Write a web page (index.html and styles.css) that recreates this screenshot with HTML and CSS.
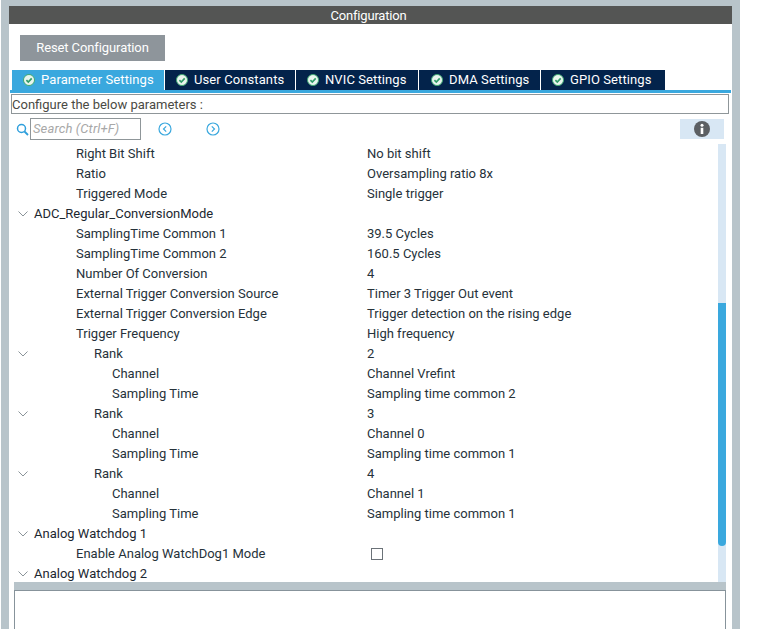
FILE: index.html
```html
<!DOCTYPE html>
<html lang="en">
<head>
<meta charset="utf-8">
<title>Configuration</title>
<link rel="stylesheet" href="styles.css">
</head>
<body>
<svg width="0" height="0" class="defs">
  <symbol id="ok" viewBox="0 0 12 12"><circle cx="6" cy="6" r="5.5" fill="#d9efe2" stroke="#3fa873"/><circle cx="6" cy="6" r="4.6" fill="#e9f5ee"/><path d="M3.4 6.1 5.3 8 8.7 4.4" fill="none" stroke="#2f9c68" stroke-width="1.7"/></symbol>
  <symbol id="chev" viewBox="0 0 10 6"><path d="M.5.5 5 5 9.500.5" fill="none" stroke="#8a9499" stroke-width="1"/></symbol>
</svg>
<div class="panel">
  <div class="inner">
    <div class="title">Configuration</div>
    <div class="btn">Reset Configuration</div>
    <div class="tabs">
      <div class="tab active t1"><svg class="ok"><use href="#ok"/></svg><span class="tabtext">Parameter Settings</span></div>
      <div class="tab t2"><svg class="ok"><use href="#ok"/></svg><span class="tabtext">User Constants</span></div>
      <div class="tab t3"><svg class="ok"><use href="#ok"/></svg><span class="tabtext">NVIC Settings</span></div>
      <div class="tab t4"><svg class="ok"><use href="#ok"/></svg><span class="tabtext">DMA Settings</span></div>
      <div class="tab t5"><svg class="ok"><use href="#ok"/></svg><span class="tabtext">GPIO Settings</span></div>
    </div>
    <div class="rule"></div>
    <div class="hint">Configure the below parameters :</div>
    <div class="searchrow">
      <svg class="mag" viewBox="0 0 13 13"><circle cx="5.500" cy="5.500" r="4" fill="none" stroke="#2f9fdc" stroke-width="1.500"/><path d="M8.500 8.500 12 12" stroke="#2f9fdc" stroke-width="1.800"/></svg>
      <div class="search">Search (Ctrl+F)</div>
      <svg class="nav nav1" viewBox="0 0 14 14"><circle cx="7" cy="7" r="6" fill="none" stroke="#3aa8de" stroke-width="1.200"/><path d="M8.200 4.300 5.500 7l2.700 2.700" fill="none" stroke="#3aa8de" stroke-width="1.200"/></svg>
      <svg class="nav nav2" viewBox="0 0 14 14"><circle cx="7" cy="7" r="6" fill="none" stroke="#3aa8de" stroke-width="1.200"/><path d="M5.800 4.300 8.500 7l-2.700 2.700" fill="none" stroke="#3aa8de" stroke-width="1.200"/></svg>
      <div class="info"><svg class="infoicon" viewBox="0 0 16 16"><circle cx="8" cy="8" r="8" fill="#5b5f63"/><rect x="6.700" y="6.800" width="2.600" height="6.200" fill="#fff"/><circle cx="8" cy="4.300" r="1.500" fill="#fff"/></svg></div>
    </div>
    <div class="treewrap">
      <div class="tree">
        <div class="row"><span class="name l1">Right Bit Shift</span><span class="val">No bit shift</span></div>
        <div class="row"><span class="name l1">Ratio</span><span class="val">Oversampling ratio 8x</span></div>
        <div class="row"><span class="name l1">Triggered Mode</span><span class="val">Single trigger</span></div>
        <div class="row"><svg class="chev"><use href="#chev"/></svg><span class="group">ADC_Regular_ConversionMode</span></div>
        <div class="row"><span class="name l1">SamplingTime Common 1</span><span class="val">39.5 Cycles</span></div>
        <div class="row"><span class="name l1">SamplingTime Common 2</span><span class="val">160.5 Cycles</span></div>
        <div class="row"><span class="name l1">Number Of Conversion</span><span class="val">4</span></div>
        <div class="row"><span class="name l1">External Trigger Conversion Source</span><span class="val">Timer 3 Trigger Out event</span></div>
        <div class="row"><span class="name l1">External Trigger Conversion Edge</span><span class="val">Trigger detection on the rising edge</span></div>
        <div class="row"><span class="name l1">Trigger Frequency</span><span class="val">High frequency</span></div>
        <div class="row"><svg class="chev"><use href="#chev"/></svg><span class="name l2c">Rank</span><span class="val">2</span></div>
        <div class="row"><span class="name l3">Channel</span><span class="val">Channel Vrefint</span></div>
        <div class="row"><span class="name l3">Sampling Time</span><span class="val">Sampling time common 2</span></div>
        <div class="row"><svg class="chev"><use href="#chev"/></svg><span class="name l2c">Rank</span><span class="val">3</span></div>
        <div class="row"><span class="name l3">Channel</span><span class="val">Channel 0</span></div>
        <div class="row"><span class="name l3">Sampling Time</span><span class="val">Sampling time common 1</span></div>
        <div class="row"><svg class="chev"><use href="#chev"/></svg><span class="name l2c">Rank</span><span class="val">4</span></div>
        <div class="row"><span class="name l3">Channel</span><span class="val">Channel 1</span></div>
        <div class="row"><span class="name l3">Sampling Time</span><span class="val">Sampling time common 1</span></div>
        <div class="row"><svg class="chev"><use href="#chev"/></svg><span class="group">Analog Watchdog 1</span></div>
        <div class="row"><span class="name l1">Enable Analog WatchDog1 Mode</span><span class="val"><span class="check"></span></span></div>
        <div class="row"><svg class="chev"><use href="#chev"/></svg><span class="group">Analog Watchdog 2</span></div>
      </div>
      <div class="track"><div class="thumb"></div></div>
    </div>
    <div class="split"></div>
    <div class="lower"></div>
  </div>
</div>
</body>
</html>
```
FILE: styles.css
```css
html, body { margin: 0; padding: 0; background: #fff; }
body { width: 757px; height: 629px; overflow: hidden; font-family: Roboto, "Liberation Sans", Arial, sans-serif; font-size: 13px; color: #26323a; }
.defs { position: absolute; }
.panel { width: 739px; height: 629px; margin-left: 1px; padding: 6px 8px 0; box-sizing: border-box; background: #b8c4ca; }
.inner { width: 723px; height: 623px; background: #fff; overflow: hidden; }
.title { height: 18px; line-height: 20px; padding-right: 4px; box-sizing: border-box; background: #545554; color: #fff; text-align: center; letter-spacing: -.2px; }
.btn { width: 145px; height: 26px; line-height: 26px; margin: 11px 0 0 11px; background: #8e959b; color: #fff; text-align: center; letter-spacing: -.1px; }
.tabs { display: flex; gap: 1px; height: 20px; margin: 9px 0 0 3px; }
.tab { display: flex; align-items: center; height: 20px; background: #03234b; color: #fff; letter-spacing: .1px; box-sizing: border-box; padding-left: 12px; }
.tabtext { margin-bottom: 2px; }
.tab.active { background: #3aa8de; }
.t1 { width: 152px; padding-left: 11px; }
.t2 { width: 130px; padding-left: 11px; }
.t3 { width: 122px; padding-left: 11px; }
.t4 { width: 121px; padding-left: 12px; }
.t5 { width: 124px; padding-left: 11px; }
.ok { width: 12px; height: 12px; margin-right: 6px; flex: none; }
.rule { height: 3px; margin-left: 1px; width: 721px; background: #3aa8de; }
.hint { height: 20px; line-height: 19px; margin: 1px 3px 0 2px; border: 1px solid #8f9699; box-sizing: border-box; width: 718px; color: #4a4a44; }
.searchrow { display: flex; align-items: center; height: 22px; margin-top: 4px; padding-left: 7px; }
.mag { width: 13px; height: 13px; flex: none; margin-right: 1px; }
.search { width: 111px; height: 22px; line-height: 20px; box-sizing: border-box; border: 1px solid #8f9699; padding-left: 2px; color: #a8a8a8; font-style: italic; letter-spacing: .13px; flex: none; }
.nav { width: 14px; height: 14px; flex: none; }
.nav1 { margin-left: 17px; }
.nav2 { margin-left: 34px; }
.info { width: 44px; height: 20px; margin-left: 460px; background: #d8e7f4; display: flex; align-items: center; justify-content: center; flex: none; }
.infoicon { width: 16px; height: 16px; }
.treewrap { display: flex; height: 438px; margin-top: 4px; overflow: hidden; }
.tree { width: 709px; }
.row { height: 20px; line-height: 19px; display: flex; align-items: center; white-space: nowrap; }
.chev { width: 10px; height: 6px; margin-left: 9px; flex: none; }
.group { margin-left: 6px; margin-bottom: 2px; color: #1c2730; }
.name { display: block; flex: none; margin-bottom: 2px; }
.l1 { margin-left: 67px; width: 291px; }
.l2c { margin-left: 66px; width: 273px; }
.l3 { margin-left: 103px; width: 255px; }
.val { display: block; margin-bottom: 2px; }
.check { display: block; width: 10px; height: 10px; border: 1px solid #6b7278; margin: 2px 0 0 4px; }
.track { width: 8px; height: 438px; background: #d8e7f4; flex: none; }
.thumb { width: 8px; height: 243px; margin-top: 159px; background: #3aa8de; border-radius: 0 0 4px 4px; }
.split { width: 712px; height: 8px; margin-left: 5px; background: #b8c4ca; }
.lower { width: 712px; height: 60px; margin-left: 5px; box-sizing: border-box; border: 1px solid #87939b; border-bottom: 0; background: #fff; }
```
